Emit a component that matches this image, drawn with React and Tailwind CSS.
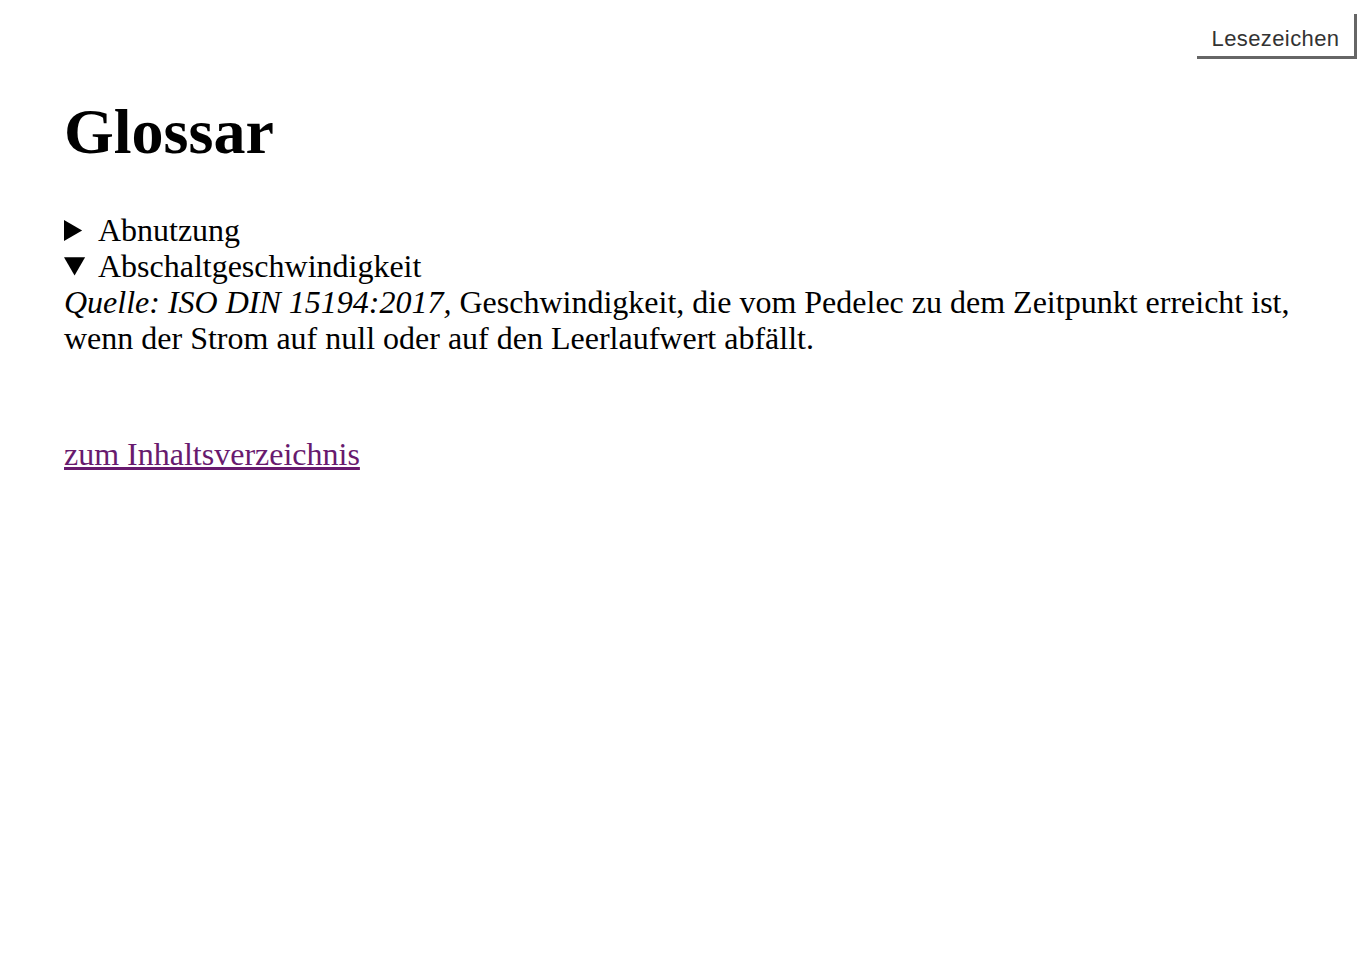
export default function App() {
  return (
    <div className="min-h-[968px] bg-white px-16 pt-[95px] text-black [font-family:'Liberation_Serif','Times_New_Roman',serif] text-[32px] leading-[36px]">
      {/* Bookmark button */}
      <button className="fixed right-[13px] top-[14px] h-[45px] w-[160px] border-r-[3px] border-b-[3px] border-[#666] bg-white pt-[7px] text-[22px] tracking-[0.4px] text-[#333] [font-family:'Liberation_Sans',Arial,sans-serif]">
        Lesezeichen
      </button>

      <h1 className="mb-[44px] text-[64px] font-bold leading-[73px]">Glossar</h1>

      <details>
        <summary className="cursor-pointer">Abnutzung</summary>
      </details>
      <details open>
        <summary className="cursor-pointer">Abschaltgeschwindigkeit</summary>
        <p>
          <i>Quelle: ISO DIN 15194:2017,</i> Geschwindigkeit, die vom Pedelec zu dem Zeitpunkt erreicht ist,
          wenn der Strom auf null oder auf den Leerlaufwert abfällt.
        </p>
      </details>

      <p className="mt-[80px]">
        <a href="#" className="text-[#681a6e] underline">zum Inhaltsverzeichnis</a>
      </p>
    </div>
  );
}
